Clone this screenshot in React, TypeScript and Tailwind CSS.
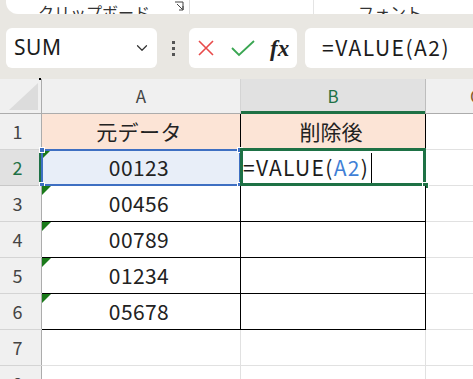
import { ChevronDown } from 'lucide-react';

const font = { fontFamily: '"Noto Sans CJK JP", "Noto Sans", sans-serif' };

const rows = [
  { n: '1', a: '元データ', b: '削除後' },
  { n: '2', a: '00123', b: '' },
  { n: '3', a: '00456', b: '' },
  { n: '4', a: '00789', b: '' },
  { n: '5', a: '01234', b: '' },
  { n: '6', a: '05678', b: '' },
  { n: '7', a: '', b: '' },
  { n: '8', a: '', b: '' },
];

function Triangle() {
  return (
    <svg className="absolute left-0 top-0" width="9" height="9" viewBox="0 0 9 9">
      <polygon points="0,0 9,0 0,9" fill="#1a7a1a" />
    </svg>
  );
}

function Corner({ pos }: { pos: string }) {
  return <div className={`absolute h-[6px] w-[6px] bg-[#3e6fc2] border border-white ${pos}`} />;
}

export default function App() {
  return (
    <div className="w-[473px] h-[379px] overflow-hidden bg-[#e9e7e2] text-[#222]" style={font}>
      {/* ribbon bottom */}
      <div className="ml-[6px] h-[14px] bg-white rounded-bl-[12px] flex items-end overflow-hidden text-[16px] text-[#333]">
        <span className="ml-[32px] shrink-0 leading-[16px] -mb-[6px]">クリップボード</span>
        <svg className="ml-[24px] mb-[3px] shrink-0" width="10" height="10" viewBox="0 0 10 10">
          <path d="M1 1 H9 V9 M3 3 L8.5 8.5 M5 9 H9 V5" stroke="#444" strokeWidth="1" fill="none" />
        </svg>
        <div className="ml-[5px] h-full w-px shrink-0 bg-[#ddd]" />
        <div className="ml-[123px] h-full w-px shrink-0 bg-[#e4e4e4]" />
        <span className="ml-[44px] shrink-0 leading-[16px] -mb-[6px]">フォント</span>
      </div>

      {/* formula bar */}
      <div className="mt-[14px] flex h-[40px] items-stretch">
        <div className="ml-[6px] w-[151px] shrink-0 bg-white rounded-[6px] flex items-center justify-between pl-[8px] pr-[6px]">
          <span className="text-[21px] text-[#1b1b1b] tracking-[0.5px]" style={{ fontFamily: '"Noto Sans", sans-serif' }}>SUM</span>
          <ChevronDown size={18} strokeWidth={1.6} className="text-[#333]" />
        </div>
        <div className="w-[32px] shrink-0 flex flex-col items-center justify-center gap-[3px]">
          <div className="h-[3px] w-[3px] bg-[#555]" />
          <div className="h-[3px] w-[3px] bg-[#555]" />
          <div className="h-[3px] w-[3px] bg-[#555]" />
        </div>
        <div className="w-[108px] shrink-0 bg-white rounded-[6px] flex items-center pl-[8px]">
          <svg width="18" height="18" viewBox="0 0 18 18">
            <path d="M2 2 L16 16 M16 2 L2 16" stroke="#e84a4a" strokeWidth="1.6" fill="none" />
          </svg>
          <svg className="ml-[16px]" width="24" height="18" viewBox="0 0 24 18">
            <path d="M1 9 L8 16 L23 2" stroke="#3aa652" strokeWidth="1.8" fill="none" />
          </svg>
          <span className="ml-[15px] text-[23px] italic font-semibold text-[#222] leading-none" style={{ fontFamily: '"Liberation Serif", serif' }}>fx</span>
        </div>
        <div className="ml-[8px] flex-1 bg-white rounded-l-[6px] flex items-center pl-[17px] text-[21px] tracking-[1.5px] text-[#1b1b1b]">
          =VALUE(A2)
        </div>
      </div>

      {/* grid */}
      <div className="mt-[11px] bg-white">
        {/* column headers */}
        <div className="flex h-[35px] bg-[#f0f0f0] border-b border-[#acacac] text-[17px] text-[#444]">
          <div className="w-[42px] shrink-0 border-r border-[#acacac] flex items-end justify-end p-[3px] relative">
            <div className="absolute -top-[1px] right-0 h-[2px] w-[2px] bg-black" />
            <svg width="29" height="27" viewBox="0 0 29 27">
              <polygon points="29,0 29,27 0,27" fill="#dcdcdc" />
            </svg>
          </div>
          <div className="w-[199px] shrink-0 border-r border-[#d4d4d4] flex items-center justify-center">A</div>
          <div className="w-[185px] shrink-0 border-r border-[#bdbdbd] bg-[#e1e1e1] flex items-center justify-center text-[#1e7145] relative">
            B
            <div className="absolute -bottom-[1px] left-0 right-0 h-[3px] bg-[#1e7145]" />
          </div>
          <div className="flex-1 min-w-0 pl-[44px] flex items-center text-[#8a5a2b] overflow-hidden">C</div>
        </div>

        {rows.map((r, i) => {
          const inTable = i < 6;
          const sel = i === 1;
          const head = i === 0;
          return (
            <div key={r.n} className="flex h-[36px] text-[21px]">
              <div
                className={`w-[42px] shrink-0 border-b border-r flex items-center justify-center text-[18px] relative ${
                  sel ? 'bg-[#e1e1e1] text-[#1e7145] border-[#c8c8c8]' : 'bg-[#f0f0f0] text-[#444] border-[#d4d4d4]'
                }`}
              >
                <span className="pr-[6px]">{r.n}</span>
                <div className="absolute right-[-1px] top-0 bottom-0 w-px bg-[#acacac]" />
                {sel && <div className="absolute -right-[1px] -top-[1px] -bottom-[1px] w-[3px] bg-[#1e7145]" />}
              </div>
              <div
                className={`w-[199px] shrink-0 border-b border-r flex items-center justify-center relative ${
                  inTable ? 'border-black' : 'border-[#e1e1e1]'
                } ${head ? 'bg-[#fce4d6]' : sel ? 'bg-[#e8eef8]' : 'bg-white'}`}
              >
                {i >= 1 && i <= 5 && <Triangle />}
                <span className="pr-[4px] tracking-[0.4px]">{r.a}</span>
                {sel && (
                  <>
                    <div className="absolute -left-[1px] -top-[1px] -right-[1px] -bottom-[1px] border-2 border-[#3e6fc2]" />
                    <Corner pos="-left-[3px] -top-[3px]" />
                    <Corner pos="-right-[3px] -top-[3px]" />
                    <Corner pos="-left-[3px] -bottom-[3px]" />
                    <Corner pos="-right-[3px] -bottom-[3px]" />
                  </>
                )}
              </div>
              <div
                className={`w-[185px] shrink-0 border-b border-r flex items-center relative ${
                  inTable ? 'border-black' : 'border-[#e1e1e1]'
                } ${head ? 'bg-[#fce4d6] justify-center' : 'bg-white'}`}
              >
                {head && <span className="pr-[4px]">{r.b}</span>}
                {sel && (
                  <>
                    <span className="pl-[2px] text-[#1b1b1b] tracking-[1.3px]">
                      =VALUE(<span className="text-[#3f7fd6]">A2</span>)
                    </span>
                    <div className="ml-[2px] h-[30px] w-px bg-black" />
                    <div className="absolute -left-[1px] -top-[2px] -right-[1px] -bottom-[1px] border-[3px] border-[#1e7145]" />
                    <div className="absolute -right-[4px] -bottom-[4px] h-[7px] w-[7px] bg-[#1e7145] border border-white" />
                  </>
                )}
              </div>
              <div className="flex-1 min-w-0 border-b border-[#e1e1e1] bg-white" />
            </div>
          );
        })}
      </div>
    </div>
  );
}
